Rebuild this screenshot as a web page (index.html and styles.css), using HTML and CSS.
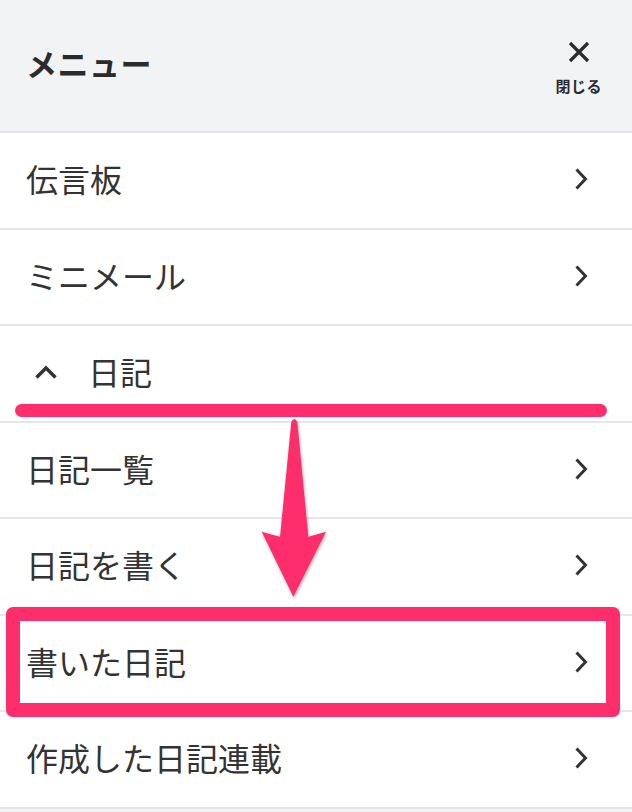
FILE: index.html
```html
<!DOCTYPE html>
<html lang="ja">
<head>
<meta charset="utf-8">
<title>メニュー</title>
<link rel="stylesheet" href="styles.css">
</head>
<body>
<div class="menu">
  <header class="header">
    <div class="title">メニュー</div>
    <div class="close">
      <svg class="close-icon" width="22" height="22" viewBox="0 0 22 22"><path d="M2 2 L20 20 M20 2 L2 20" stroke="#2b2b2b" stroke-width="3.2" fill="none"/></svg>
      <span class="close-label">閉じる</span>
    </div>
  </header>
  <ul class="list">
    <li class="row"><span>伝言板</span><svg class="chev" width="14" height="24" viewBox="0 0 14 24"><path d="M2.5 2.5 L11.5 12 L2.5 21.5" stroke="#333" stroke-width="3" fill="none"/></svg></li>
    <li class="row"><span>ミニメール</span><svg class="chev" width="14" height="24" viewBox="0 0 14 24"><path d="M2.5 2.5 L11.5 12 L2.5 21.5" stroke="#333" stroke-width="3" fill="none"/></svg></li>
    <li class="row section"><svg class="up" width="24" height="16" viewBox="0 0 24 16"><path d="M2.5 13.5 L12 4 L21.5 13.5" stroke="#333" stroke-width="3.5" fill="none"/></svg><span>日記</span></li>
    <li class="row"><span>日記一覧</span><svg class="chev" width="14" height="24" viewBox="0 0 14 24"><path d="M2.5 2.5 L11.5 12 L2.5 21.5" stroke="#333" stroke-width="3" fill="none"/></svg></li>
    <li class="row"><span>日記を書く</span><svg class="chev" width="14" height="24" viewBox="0 0 14 24"><path d="M2.5 2.5 L11.5 12 L2.5 21.5" stroke="#333" stroke-width="3" fill="none"/></svg></li>
    <li class="row"><span>書いた日記</span><svg class="chev" width="14" height="24" viewBox="0 0 14 24"><path d="M2.5 2.5 L11.5 12 L2.5 21.5" stroke="#333" stroke-width="3" fill="none"/></svg></li>
    <li class="row"><span>作成した日記連載</span><svg class="chev" width="14" height="24" viewBox="0 0 14 24"><path d="M2.5 2.5 L11.5 12 L2.5 21.5" stroke="#333" stroke-width="3" fill="none"/></svg></li>
  </ul>
</div>
<div class="mark-line"></div>
<svg class="mark-arrow" width="80" height="190" viewBox="255 414 80 190"><path d="M291.3 422 Q294.3 416 297.3 422 L308.3 536.7 L326 531.7 L293.3 596.7 L261.7 531.7 L280 536.7 Z" fill="#fe2e6c"/></svg>
<div class="mark-box"></div>
</body>
</html>
```

FILE: styles.css
```css
html, body {
  margin: 0;
  padding: 0;
}
body {
  background: #f3f3f5;
  font-family: "Noto Sans CJK JP", "Noto Sans", sans-serif;
  color: #333333;
  width: 632px;
  height: 812px;
  overflow: hidden;
  position: relative;
}
.menu {
  background: #ffffff;
}
.header {
  box-sizing: border-box;
  height: 133px;
  background: #f2f3f5;
  border-bottom: 2px solid #e3e3e8;
  display: flex;
  align-items: center;
  justify-content: space-between;
  padding: 0 30px 0 26px;
}
.title {
  font-size: 31px;
  font-weight: 700;
  color: #2b2b2b;
  line-height: 1;
  letter-spacing: 0.5px;
  margin-bottom: 7px;
}
.close {
  display: flex;
  flex-direction: column;
  align-items: center;
  margin-top: 4px;
}
.close-icon {
  display: block;
}
.close-label {
  margin-top: 14px;
  font-size: 15px;
  line-height: 18px;
  font-weight: 700;
  color: #2b2b2b;
  letter-spacing: 0.5px;
}
.list {
  list-style: none;
  margin: 0;
  padding: 0;
}
.row {
  height: 96.5px;
  box-sizing: border-box;
  border-bottom: 2px solid #e6e6ea;
  display: flex;
  align-items: center;
  justify-content: space-between;
  padding: 0 44px 4px 26px;
  font-size: 32px;
  line-height: 1;
  background: #ffffff;
}
.row.section {
  justify-content: flex-start;
  padding-left: 34px;
}
.chev {
  margin-top: 2px;
}
.up {
  margin-right: 30px;
  margin-top: 2px;
  display: block;
}
.chev {
  display: block;
}
.mark-line {
  position: absolute;
  left: 15px;
  top: 404px;
  width: 592px;
  height: 13px;
  border-radius: 6.5px;
  background: #fe2e6c;
}
.mark-arrow {
  position: absolute;
  left: 255px;
  top: 414px;
  filter: drop-shadow(1px 2px 1.5px rgba(0, 0, 0, 0.3));
}
.mark-box {
  position: absolute;
  left: 6px;
  top: 607px;
  width: 614px;
  height: 110px;
  box-sizing: border-box;
  border: 14px solid #fe2e6c;
  border-radius: 7px;
}
```
